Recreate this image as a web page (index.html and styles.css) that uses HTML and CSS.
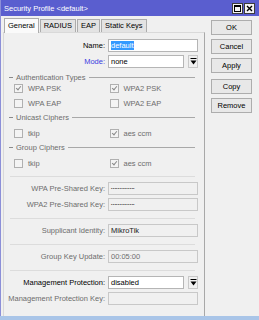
FILE: index.html
```html
<!DOCTYPE html>
<html>
<head>
    <title>Security Profile</title>
    <link rel="stylesheet" href="styles.css">
</head>
<body>
    <div class="window">
        <div class="titlebar">
            <span class="title">Security Profile &lt;default&gt;</span>
            <div class="win-buttons">
                <span class="win-btn">
                    <svg width="7" height="7" viewBox="0 0 7 7"><rect x="0.5" y="0.5" width="6" height="6" fill="none" stroke="#000"/><line x1="0" y1="1.5" x2="7" y2="1.5" stroke="#000"/></svg>
                </span>
                <span class="win-btn">
                    <svg width="7" height="7" viewBox="0 0 7 7"><path d="M1 1 L6 6 M6 1 L1 6" stroke="#000" stroke-width="1.4"/></svg>
                </span>
            </div>
        </div>
        <div class="content">
            <div class="main">
                <div class="tabs">
                    <div class="tab active">General</div>
                    <div class="tab">RADIUS</div>
                    <div class="tab">EAP</div>
                    <div class="tab">Static Keys</div>
                </div>
                <div class="panel">
                    <div class="field first">
                        <label class="label">Name:</label>
                        <div class="input"><span class="selected">default</span></div>
                    </div>
                    <div class="field">
                        <label class="label blue">Mode:</label>
                        <div class="input short">none</div>
                        <div class="drop">
                            <svg width="7" height="7" viewBox="0 0 7 7"><line x1="0.5" y1="0.5" x2="6.5" y2="0.5" stroke="#000"/><path d="M0.5 2.5 L6.5 2.5 L3.5 6.5 Z" fill="#000"/></svg>
                        </div>
                    </div>

                    <div class="group-title"><span class="dash"></span><span>Authentication Types</span><span class="rule"></span></div>
                    <div class="check-row first-check">
                        <div class="check"><span class="box on"></span>WPA PSK</div>
                        <div class="check"><span class="box on"></span>WPA2 PSK</div>
                    </div>
                    <div class="check-row">
                        <div class="check"><span class="box"></span>WPA EAP</div>
                        <div class="check"><span class="box"></span>WPA2 EAP</div>
                    </div>

                    <div class="group-title"><span class="dash"></span><span>Unicast Ciphers</span><span class="rule"></span></div>
                    <div class="check-row">
                        <div class="check"><span class="box"></span>tkip</div>
                        <div class="check"><span class="box on"></span>aes ccm</div>
                    </div>

                    <div class="group-title"><span class="dash"></span><span>Group Ciphers</span><span class="rule"></span></div>
                    <div class="check-row">
                        <div class="check"><span class="box"></span>tkip</div>
                        <div class="check"><span class="box on"></span>aes ccm</div>
                    </div>

                    <div class="separator after-checks"></div>
                    <div class="field tight">
                        <label class="label grey">WPA Pre-Shared Key:</label>
                        <div class="input disabled dots">••••••••••••••</div>
                    </div>
                    <div class="field">
                        <label class="label grey">WPA2 Pre-Shared Key:</label>
                        <div class="input disabled dots">••••••••••••••</div>
                    </div>

                    <div class="separator"></div>
                    <div class="field tight">
                        <label class="label grey">Supplicant Identity:</label>
                        <div class="input disabled dark">MikroTik</div>
                    </div>

                    <div class="separator"></div>
                    <div class="field tight">
                        <label class="label grey">Group Key Update:</label>
                        <div class="input disabled">00:05:00</div>
                    </div>

                    <div class="separator"></div>
                    <div class="field tight">
                        <label class="label">Management Protection:</label>
                        <div class="input short">disabled</div>
                        <div class="drop">
                            <svg width="7" height="7" viewBox="0 0 7 7"><line x1="0.5" y1="0.5" x2="6.5" y2="0.5" stroke="#000"/><path d="M0.5 2.5 L6.5 2.5 L3.5 6.5 Z" fill="#000"/></svg>
                        </div>
                    </div>
                    <div class="field">
                        <label class="label grey">Management Protection Key:</label>
                        <div class="input disabled"></div>
                    </div>
                </div>
            </div>
            <div class="side">
                <div class="button">OK</div>
                <div class="button">Cancel</div>
                <div class="button">Apply</div>
                <div class="button spaced">Copy</div>
                <div class="button">Remove</div>
            </div>
        </div>
    </div>
    <div class="taskbar"></div>
</body>
</html>
```
FILE: styles.css
```css
body {
    font-family: "Liberation Sans", Arial, sans-serif;
    font-size: 7.5px;
    margin: 0;
    padding: 0;
    width: 259px;
    height: 320px;
    overflow: hidden;
    background-color: #f0f0f0;
    color: #000;
}
.window {
    height: 316px;
    background-color: #f0f0f0;
    box-sizing: border-box;
    border-left: 1px solid #8c8fd8;
    display: flex;
    flex-direction: column;
}
.titlebar {
    height: 16px;
    background-color: #5a5ecf;
    display: flex;
    align-items: center;
    justify-content: space-between;
    padding: 0 4px 0 3px;
}
.title {
    color: #fff;
    font-size: 7.5px;
}
.win-buttons {
    display: flex;
    gap: 1px;
}
.win-btn {
    width: 9px;
    height: 9px;
    background-color: #f4f4f4;
    border: 1px solid #3c3c3c;
    display: flex;
    align-items: center;
    justify-content: center;
}
.content {
    flex: 1;
    display: flex;
    padding: 1px 0 0 2px;
}
.main {
    width: 202px;
    display: flex;
    flex-direction: column;
}
.tabs {
    display: flex;
    height: 15px;
    align-items: flex-end;
    padding-left: 1px;
}
.tab {
    height: 12px;
    line-height: 12px;
    padding: 0 3px;
    margin-right: 1px;
    background-color: #e3e3e3;
    border: 1px solid #acacac;
    border-bottom: none;
    color: #000;
}
.tab.active {
    height: 14px;
    line-height: 14px;
    background-color: #fafafa;
    position: relative;
    top: 1px;
}
.panel {
    flex: 1;
    border: 1px solid #d9d9d9;
    border-right-color: #a8a8a8;
    border-bottom: none;
    padding: 0 5px 0 4px;
}
.field {
    display: flex;
    align-items: center;
    height: 13px;
    margin-top: 3px;
}
.field.first {
    margin-top: 6px;
}
.field.tight {
    margin-top: 0;
}
.label {
    width: 100px;
    text-align: right;
    padding-right: 3px;
    box-sizing: border-box;
    white-space: nowrap;
}
.label.blue {
    color: #3b3be0;
}
.label.grey {
    color: #6d6d6d;
}
.input {
    width: 90px;
    height: 13px;
    box-sizing: border-box;
    background-color: #fff;
    border: 1px solid #b5b5b5;
    padding: 0 2px;
    line-height: 11px;
    color: #000;
    white-space: nowrap;
    overflow: hidden;
}
.input.short {
    width: 76px;
}
.input.disabled {
    background-color: #f0f0f0;
    border-color: #c8c8c8;
    color: #6d6d6d;
}
.input.dark {
    color: #1a1a1a;
}
.input.dots {
    font-size: 4px;
    letter-spacing: 0.3px;
    color: #333;
}
.selected {
    background-color: #3399ff;
    color: #fff;
}
.drop {
    width: 10px;
    height: 13px;
    box-sizing: border-box;
    margin-left: 4px;
    border: 1px solid #c8c8c8;
    background-color: #f0f0f0;
    display: flex;
    align-items: center;
    justify-content: center;
}
.group-title {
    display: flex;
    align-items: center;
    height: 11px;
    margin-top: 4px;
    color: #6d6d6d;
    padding-right: 4px;
}
.dash {
    width: 4px;
    height: 1px;
    background-color: #8a8a8a;
    margin: 0 3px 0 1px;
}
.rule {
    flex: 1;
    height: 1px;
    background-color: #a8a8a8;
    margin-left: 3px;
}
.check-row {
    display: flex;
    height: 10px;
    margin-top: 5px;
    color: #6d6d6d;
}
.check-row.first-check {
    margin-top: 0;
}
.check {
    width: 93px;
    display: flex;
    align-items: center;
    padding-left: 6px;
}
.box {
    width: 9px;
    height: 9px;
    box-sizing: border-box;
    border: 1px solid #b0b0b0;
    background-color: #f4f4f4;
    margin-right: 5px;
    position: relative;
}
.box.on::after {
    content: "";
    position: absolute;
    left: 2px;
    top: 0px;
    width: 2px;
    height: 4px;
    border: solid #8a8a8a;
    border-width: 0 1px 1px 0;
    transform: rotate(40deg);
}
.separator {
    height: 1px;
    background-color: #dcdcdc;
    margin: 7px 4px 5px 2px;
}
.separator.after-checks {
    margin-top: 8px;
}
.side {
    width: 55px;
    display: flex;
    flex-direction: column;
    align-items: flex-start;
    padding: 3px 0 0 6px;
    gap: 4px;
}
.button {
    width: 41px;
    height: 15px;
    box-sizing: border-box;
    border: 1px solid #adadad;
    background-color: #e8e8e8;
    text-align: center;
    line-height: 13px;
    color: #000;
}
.button.spaced {
    margin-top: 2px;
}
.taskbar {
    height: 4px;
    background-color: #a9c5e8;
}
```
